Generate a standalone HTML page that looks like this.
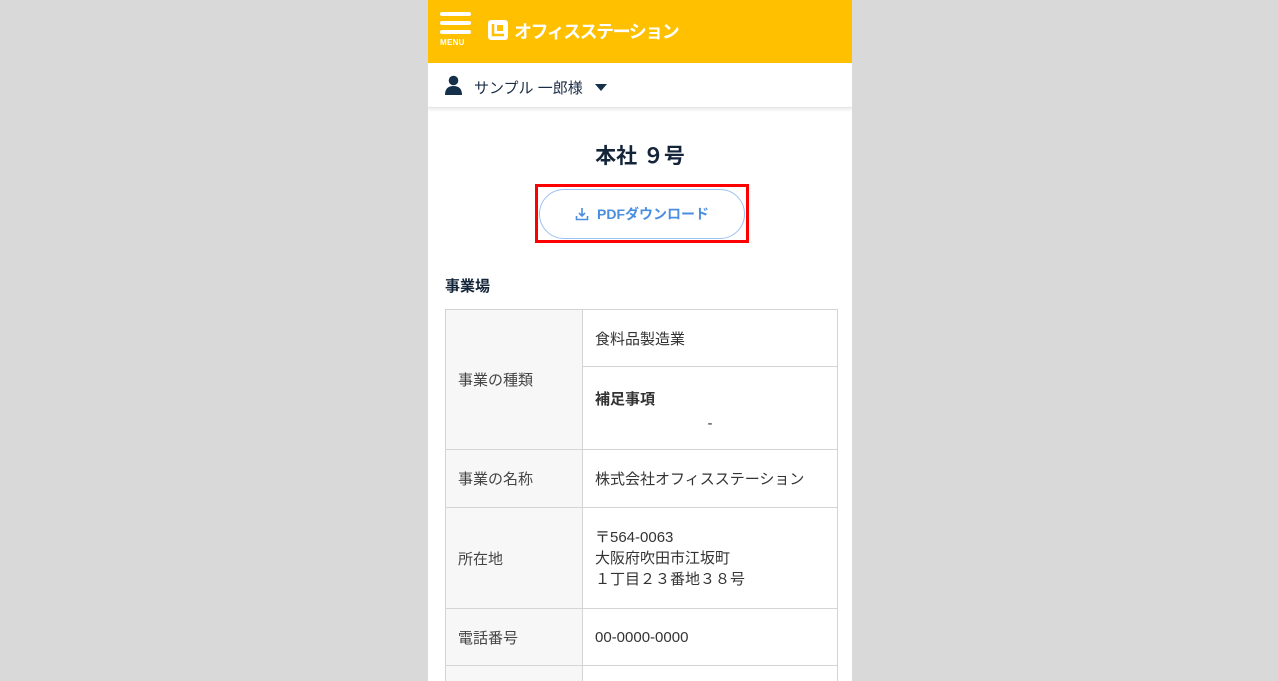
<!DOCTYPE html>
<html><head><meta charset="utf-8"><style>
*{margin:0;padding:0;box-sizing:border-box}
html,body{width:1278px;height:681px;overflow:hidden}
body{background:#d9d9d9;font-family:"Liberation Sans","Noto Sans CJK JP",sans-serif;color:#333}
.col{position:absolute;left:428px;top:0;width:424px;height:681px;background:#fff;overflow:hidden}
.hdr{position:absolute;left:0;top:0;width:424px;height:63px;background:#ffc000}
.bar{position:absolute;left:12px;width:31px;height:4px;background:#fff;border-radius:2px}
.menu{position:absolute;left:12px;top:38px;font-size:8px;font-weight:bold;color:#fff;letter-spacing:0.3px}
.brand{position:absolute;left:86px;top:18px;font-size:18px;font-weight:bold;color:#fff;letter-spacing:-1.5px}
.user{position:absolute;left:0;top:63px;width:424px;height:45px;border-bottom:1px solid #e6e6e6;box-shadow:0 2px 3px rgba(0,0,0,.08)}
.uname{position:absolute;left:46px;top:14px;font-size:15px;color:#1b2d45}
.tri{position:absolute;left:167px;top:21px;border-left:6px solid transparent;border-right:6px solid transparent;border-top:7px solid #14304b}
h1{position:absolute;left:0;width:424px;top:140px;text-align:center;font-size:21px;color:#14253a}
.red{position:absolute;left:107px;top:184px;width:214px;height:59px;border:3px solid #f00}
.btn{position:absolute;left:111px;top:189px;width:206px;height:50px;border:1px solid #9cc2f2;border-radius:25px;color:#4a8ee0;font-weight:bold;font-size:14px;text-align:center;line-height:48px}
h2{position:absolute;left:17px;top:275px;font-size:15px;color:#14253a}
table{position:absolute;left:17px;top:309px;width:393px;border-collapse:collapse;font-size:15px}
td{border:1px solid #d4d4d4;padding:0 12px}
td.l{background:#f7f7f7;width:137px;color:#444}
</style></head><body><div class="col">
<div class="hdr">
<div class="bar" style="top:12px"></div><div class="bar" style="top:21px"></div><div class="bar" style="top:30px"></div>
<div class="menu">MENU</div>
<svg style="position:absolute;left:60px;top:20px" width="20" height="20" viewBox="0 0 20 20"><rect x="0" y="0" width="20" height="20" rx="3" fill="#fff"/><path d="M5 4v11h11" fill="none" stroke="#ffc000" stroke-width="2.5"/><rect x="9" y="5" width="6" height="6" fill="#ffc000"/></svg>
<div class="brand">オフィスステーション</div></div>
<div class="user"><svg style="position:absolute;left:17px;top:12px" width="17" height="20" viewBox="0 0 17 20"><circle cx="8.5" cy="5.5" r="4.8" fill="#14304b"/><path d="M0 20 Q0 11 8.5 11 Q17 11 17 20Z" fill="#14304b"/></svg><div class="uname">サンプル 一郎様</div><div class="tri"></div></div>
<h1>本社 ９号</h1>
<div class="red"></div>
<div class="btn"><svg width="14" height="14" viewBox="0 0 14 14" style="vertical-align:-2px;margin-right:8px"><path d="M7 1v8M4 6l3 3 3-3M1.5 9v3.5h11V9" fill="none" stroke="#4a8ee0" stroke-width="1.6"/></svg>PDFダウンロード</div>
<h2>事業場</h2>
<table>
<tr style="height:57px"><td class="l" rowspan="2">事業の種類</td><td>食料品製造業</td></tr>
<tr style="height:83px"><td><b style="display:block;margin-top:4px">補足事項</b><div style="text-align:center;margin-top:6px">-</div></td></tr>
<tr style="height:58px"><td class="l">事業の名称</td><td>株式会社オフィスステーション</td></tr>
<tr style="height:101px"><td class="l">所在地</td><td style="line-height:21px">〒564-0063<br>大阪府吹田市江坂町<br>１丁目２３番地３８号</td></tr>
<tr style="height:57px"><td class="l">電話番号</td><td>00-0000-0000</td></tr>
<tr style="height:40px"><td class="l"></td><td></td></tr>
</table>
</div></body></html>
